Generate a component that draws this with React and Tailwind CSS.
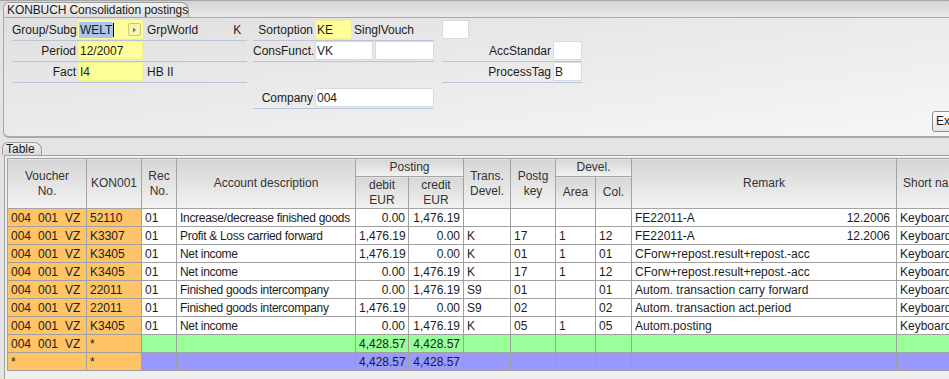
import React from "react";

const ROWS = [
  { kon: "52110", acc: "Increase/decrease finished goods", debit: "0.00", credit: "1,476.19", trans: "", key: "", area: "", col: "", remark: "FE22011-A", per: "12.2006" },
  { kon: "K3307", acc: "Profit & Loss carried forward", debit: "1,476.19", credit: "0.00", trans: "K", key: "17", area: "1", col: "12", remark: "FE22011-A", per: "12.2006" },
  { kon: "K3405", acc: "Net income", debit: "1,476.19", credit: "0.00", trans: "K", key: "01", area: "1", col: "01", remark: "CForw+repost.result+repost.-acc" },
  { kon: "K3405", acc: "Net income", debit: "0.00", credit: "1,476.19", trans: "K", key: "17", area: "1", col: "12", remark: "CForw+repost.result+repost.-acc" },
  { kon: "22011", acc: "Finished goods intercompany", debit: "0.00", credit: "1,476.19", trans: "S9", key: "01", area: "", col: "01", remark: "Autom. transaction carry forward" },
  { kon: "22011", acc: "Finished goods intercompany", debit: "1,476.19", credit: "0.00", trans: "S9", key: "02", area: "", col: "02", remark: "Autom. transaction act.period" },
  { kon: "K3405", acc: "Net income", debit: "0.00", credit: "1,476.19", trans: "K", key: "05", area: "1", col: "05", remark: "Autom.posting" },
];

const COLS = [79, 55, 35, 179, 53, 55, 47, 45, 40, 36, 265, 100];

function Field({ children, yellow, w }) {
  return (
    <div
      className={
        "h-[19px] shrink-0 rounded-[2px] border pl-[1px] leading-[19px] whitespace-nowrap overflow-hidden " +
        (yellow ? "bg-[#ffff99] border-[#f0f08a]" : "bg-white border-[#d4dae6]")
      }
      style={{ width: w }}
    >
      {children}
    </div>
  );
}

function Row({ children, line = true }) {
  return (
    <div className={"flex h-[21px] items-start " + (line ? "border-b border-[#bcc5d8]" : "")}>
      {children}
    </div>
  );
}

function Voucher({ a, b, c }) {
  return (
    <div className="flex">
      <span className="w-[27px]">{a}</span>
      <span className="w-[27px]">{b}</span>
      <span>{c}</span>
    </div>
  );
}

const th = "border border-[#a4a4a4] bg-linear-to-b from-[#d6d6d6] to-[#f2f2f2] font-normal text-[#333] leading-[15px] px-[2px]";
const td = "border border-[#a0a0a0] h-[18px] px-[3px] pt-[1px] leading-[16px] whitespace-nowrap overflow-hidden";

export default function App() {
  return (
    <div className="w-[949px] h-[379px] overflow-hidden bg-[#e4e4e4] text-[12px] text-[#1c1c1c] font-['Liberation_Sans',Arial,sans-serif]">
      {/* title strip */}
      <div className="h-[17px] flex items-end pl-[3px] border-t border-[#a6a6a6] bg-linear-to-b from-[#d4d4d4] to-[#e9e9e9]">
        <div className="h-[15px] w-[186px] whitespace-nowrap rounded-tl-[6px] rounded-tr-[8px] border border-b-0 border-[#9c9c9c] bg-linear-to-b from-[#f2f2f2] to-[#dedede] pl-[3px] leading-[14px] tracking-[-0.1px]">
          KONBUCH Consolidation postings
        </div>
      </div>

      {/* header panel */}
      <div className="ml-[3px] h-[121px] overflow-hidden rounded-bl-[6px] border-l border-t border-b-2 border-[#a8a8a8] bg-linear-to-br from-[#e0e0e0] to-[#f6f6f6] pt-[2px]">
        <div className="flex h-[91px] items-start">
          {/* left block */}
          <div className="ml-[8px] w-[235px]">
            <Row>
              <div className="w-[66px] pr-[2px] text-right leading-[21px]">Group/Subg</div>
              <div className="flex h-[19px] w-[65px] items-center rounded-[2px] bg-[#ffff99]">
                <span className="ml-[1px] mt-[1px] bg-[#a8c6ee] px-[1px] leading-[16px]">WELT</span>
                <span className="h-[14px] w-px bg-black" />
                <span className="ml-auto mr-[2px] flex h-[13px] w-[13px] items-center justify-center rounded-[2px] border border-[#c8c878] bg-[#f6f6b0]">
                  <svg width="5" height="6" viewBox="0 0 5 6"><path d="M1 0.5 L4 3 L1 5.5 Z" fill="#777" /></svg>
                </span>
              </div>
              <div className="ml-[4px] leading-[21px]">GrpWorld</div>
              <div className="ml-[35px] leading-[21px]">K</div>
            </Row>
            <Row>
              <div className="w-[66px] pr-[2px] text-right leading-[21px]">Period</div>
              <Field yellow w={65}>12/2007</Field>
            </Row>
            <Row>
              <div className="w-[66px] pr-[2px] text-right leading-[21px]">Fact</div>
              <Field yellow w={65}>I4</Field>
              <div className="ml-[4px] leading-[21px]">HB II</div>
            </Row>
          </div>

          {/* middle block */}
          <div className="ml-[6px] w-[181px]">
            <Row>
              <div className="w-[62px] pr-[2px] text-right leading-[21px]">Sortoption</div>
              <Field yellow w={37}>KE</Field>
              <div className="ml-[2px] leading-[21px]">SinglVouch</div>
            </Row>
            <Row>
              <div className="w-[62px] pr-[2px] text-right leading-[21px]">ConsFunct.</div>
              <Field w={58}>VK</Field>
              <div className="ml-[2px]">
                <Field w={59} />
              </div>
            </Row>
            <Row line={false} />
            <div className="mt-[5px]">
              <Row>
                <div className="w-[62px] pr-[2px] text-right leading-[21px]">Company</div>
                <Field w={119}>004</Field>
              </Row>
            </div>
          </div>

          {/* right block */}
          <div className="ml-[8px] w-[140px]">
            <Row line={false}>
              <Field w={27} />
            </Row>
            <Row>
              <div className="flex-1 pr-[2px] text-right leading-[21px]">AccStandar</div>
              <Field w={29} />
            </Row>
            <Row>
              <div className="flex-1 pr-[2px] text-right leading-[21px]">ProcessTag</div>
              <Field w={29}>B</Field>
            </Row>
          </div>
        </div>
        <div className="flex">
          <div className="ml-[928px] h-[21px] w-[40px] shrink-0 rounded-[3px] border border-[#8c8c8c] bg-linear-to-b from-white to-[#e6e6e6] pl-[3px] leading-[19px]">
            Ex
          </div>
        </div>
      </div>

      {/* table tab */}
      <div className="mt-[4px] ml-[2px] h-[13px] w-[40px] rounded-tl-[6px] rounded-tr-[8px] border border-b-0 border-[#a0a0a0] bg-linear-to-b from-[#f0f0f0] to-[#d8d8d8] pl-[3px] leading-[13px]">
        Table
      </div>

      {/* table frame */}
      <div className="ml-[4px] h-[230px] overflow-hidden border-l border-t border-[#a0a0a0] bg-[#efefef] pl-[2px] pt-[2px]">
        <table className="table-fixed border-collapse" style={{ width: COLS.reduce((a, b) => a + b, 0) }}>
          <colgroup>
            {COLS.map((w, i) => (
              <col key={i} style={{ width: w }} />
            ))}
          </colgroup>
          <thead>
            <tr className="h-[18px]">
              <th rowSpan={2} className={th}>Voucher<br />No.</th>
              <th rowSpan={2} className={th}>KON001</th>
              <th rowSpan={2} className={th}>Rec<br />No.</th>
              <th rowSpan={2} className={th}>Account description</th>
              <th colSpan={2} className={th}>Posting</th>
              <th rowSpan={2} className={th}>Trans.<br />Devel.</th>
              <th rowSpan={2} className={th}>Postg<br />key</th>
              <th colSpan={2} className={th}>Devel.</th>
              <th rowSpan={2} className={th}>Remark</th>
              <th rowSpan={2} className={th + " text-left pl-[6px] whitespace-nowrap"}>Short name</th>
            </tr>
            <tr className="h-[32px]">
              <th className={th}>debit<br />EUR</th>
              <th className={th}>credit<br />EUR</th>
              <th className={th}>Area</th>
              <th className={th}>Col.</th>
            </tr>
          </thead>
          <tbody>
            {ROWS.map((r, i) => (
              <tr key={i} className="bg-white">
                <td className={td + " bg-[#ffc466]"}><Voucher a="004" b="001" c="VZ" /></td>
                <td className={td + " bg-[#ffc466]"}>{r.kon}</td>
                <td className={td}>01</td>
                <td className={td + " tracking-[-0.3px]"}>{r.acc}</td>
                <td className={td + " text-right"}>{r.debit}</td>
                <td className={td + " text-right"}>{r.credit}</td>
                <td className={td}>{r.trans}</td>
                <td className={td}>{r.key}</td>
                <td className={td}>{r.area}</td>
                <td className={td}>{r.col}</td>
                <td className={td}>
                  <div className="flex justify-between">
                    <span>{r.remark}</span>
                    <span className="pr-[3px]">{r.per}</span>
                  </div>
                </td>
                <td className={td}>Keyboard</td>
              </tr>
            ))}
            <tr className="bg-[#99ff99]">
              <td className={td + " bg-[#ffc466]"}><Voucher a="004" b="001" c="VZ" /></td>
              <td className={td + " bg-[#ffc466]"}>*</td>
              <td className={td} />
              <td className={td} />
              <td className={td + " text-right"}>4,428.57</td>
              <td className={td + " text-right"}>4,428.57</td>
              <td className={td} />
              <td className={td} />
              <td className={td} />
              <td className={td} />
              <td className={td} />
              <td className={td} />
            </tr>
            <tr className="bg-[#9999ff]">
              <td className={td + " bg-[#ffc466]"}>*</td>
              <td className={td + " bg-[#ffc466]"}>*</td>
              <td className={td} />
              <td className={td} />
              <td className={td + " text-right"}>4,428.57</td>
              <td className={td + " text-right"}>4,428.57</td>
              <td className={td} />
              <td className={td} />
              <td className={td} />
              <td className={td} />
              <td className={td} />
              <td className={td} />
            </tr>
          </tbody>
        </table>
      </div>
    </div>
  );
}
